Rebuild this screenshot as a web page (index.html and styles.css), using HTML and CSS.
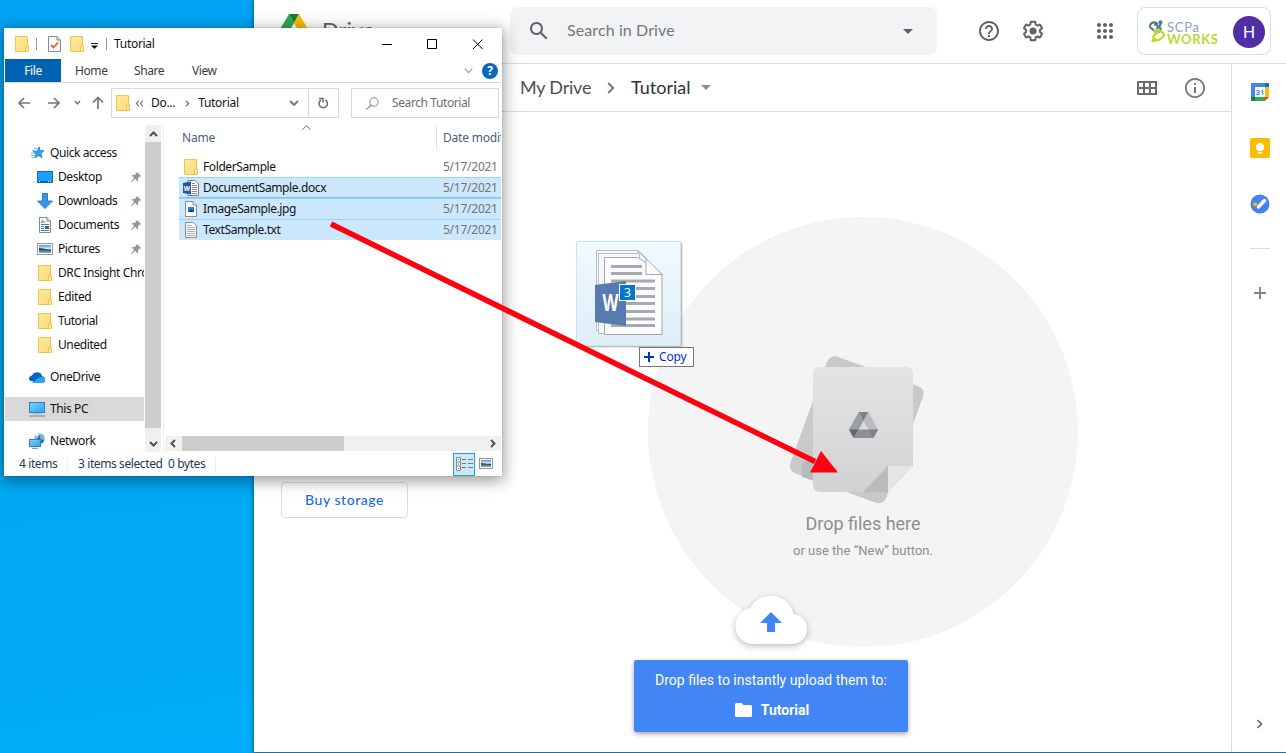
FILE: index.html
```html
<!DOCTYPE html>
<html lang="en">
<head>
<meta charset="utf-8">
<title>Tutorial - Google Drive</title>
<link rel="stylesheet" href="styles.css">
</head>
<body>
<svg width="0" height="0" class="defs">
  <defs>
    <linearGradient id="gFolder" x1="0" y1="0" x2="1" y2="1"><stop offset="0" stop-color="#ffeaa0"/><stop offset="1" stop-color="#ffdc74"/></linearGradient>
    <linearGradient id="gScreen" x1="0" y1="0" x2="1" y2="1"><stop offset="0" stop-color="#7fd0ff"/><stop offset="1" stop-color="#2aa5f5"/></linearGradient>
    <linearGradient id="gPhoto" x1="0" y1="0" x2="0" y2="1"><stop offset="0" stop-color="#4f8fe0"/><stop offset=".45" stop-color="#d8ecf8"/><stop offset=".6" stop-color="#2f5d66"/><stop offset="1" stop-color="#8fb9c9"/></linearGradient>
    <linearGradient id="gPaper" x1="0" y1="0" x2="0" y2="1"><stop offset="0" stop-color="#e4e4e4"/><stop offset="1" stop-color="#d0d2d4"/></linearGradient>
    <symbol id="folder" viewBox="0 0 14 16"><path d="M.5.5h12v9.500h.9v5.500H.5z" fill="url(#gFolder)" stroke="#eac54f"/><path d="M10.500 15.500V11q0-1 1-1h1.900v5.500z" fill="#ffe79a" stroke="#eac54f"/></symbol>
    <symbol id="pin" viewBox="0 0 10 10"><path d="M6 0l4 4-.8.8-.6-.2L7 6.300l.2 2-.9.900L4 6.900.6 10H0v-.6L3.100 6 .8 3.700l.9-.9 2 .2L5.400 1.400 5.200.8z" fill="#8c99a3"/></symbol>
    <symbol id="photo" viewBox="0 0 16 12"><rect x=".5" y=".5" width="15" height="11" fill="#fff" stroke="#979797"/><rect x="2" y="2" width="12" height="8" fill="url(#gPhoto)"/><path d="M2 5q5 0 12 3v-1H2z" fill="#24505c"/></symbol>
  </defs>
</svg>

<section class="browser">
  <header class="topbar">
    <div class="brand">
      <svg width="30" height="27" viewBox="0 0 30 27"><path d="M10 0L0 17l5 9 10-17z" fill="#34a853"/><path d="M10 0h10l-5 9z" fill="#188038"/><path d="M20 0l10 17H20L15 9z" fill="#fbbc04"/><path d="M10 17h20l-5 9H5z" fill="#4285f4"/></svg>
      <span>Drive</span>
    </div>
    <div class="search">
      <svg width="24" height="24" viewBox="0 0 24 24" fill="#5f6368"><path d="M20.490 19l-5.730-5.730C15.530 12.200 16 10.910 16 9.500 16 5.910 13.090 3 9.500 3S3 5.910 3 9.500 5.910 16 9.500 16c1.410 0 2.700-.47 3.770-1.240L19 20.490 20.490 19zM5 9.500C5 7.010 7.010 5 9.500 5S14 7.010 14 9.500 11.990 14 9.500 14 5 11.990 5 9.500z"/></svg>
      <span class="search-text">Search in Drive</span>
      <svg width="10" height="5" viewBox="0 0 10 5"><path d="M0 0h10L5 5z" fill="#5f6368"/></svg>
    </div>
    <div class="tools">
      <svg width="24" height="24" viewBox="0 0 24 24" fill="#5f6368"><path d="M11 18h2v-2h-2v2zm1-16C6.480 2 2 6.480 2 12s4.480 10 10 10 10-4.480 10-10S17.520 2 12 2zm0 18c-4.410 0-8-3.590-8-8s3.590-8 8-8 8 3.590 8 8-3.590 8-8 8zm0-14c-2.210 0-4 1.790-4 4h2c0-1.100.9-2 2-2s2 .9 2 2c0 2-3 1.750-3 5h2c0-2.250 3-2.500 3-5 0-2.210-1.790-4-4-4z"/></svg>
      <svg class="gear" width="24" height="24" viewBox="0 0 24 24" fill="#5f6368"><path d="M13.850 22.250h-3.700c-.74 0-1.360-.54-1.450-1.270l-.27-1.890c-.27-.14-.53-.29-.79-.46l-1.800.72c-.7.260-1.470-.03-1.810-.65L2.200 15.530c-.35-.66-.2-1.440.36-1.880l1.530-1.190c-.01-.15-.02-.3-.02-.46 0-.15.010-.31.020-.46l-1.520-1.190c-.59-.45-.74-1.260-.37-1.880l1.850-3.190c.34-.62 1.110-.9 1.790-.63l1.810.73c.26-.17.520-.32.780-.46l.27-1.910c.09-.7.710-1.250 1.440-1.250h3.700c.74 0 1.360.54 1.450 1.270l.27 1.890c.27.140.53.290.79.460l1.800-.72c.71-.26 1.480.03 1.820.65l1.840 3.180c.36.660.2 1.440-.36 1.880l-1.520 1.190c.01.150.02.300.02.460s-.01.310-.02.460l1.520 1.190c.56.450.72 1.230.37 1.860l-1.860 3.220c-.34.620-1.110.900-1.800.63l-1.800-.72c-.26.170-.52.320-.78.460l-.27 1.910c-.1.680-.72 1.220-1.460 1.220zm-3.230-2h2.760l.37-2.550.53-.22c.44-.18.880-.44 1.340-.78l.45-.34 2.380.96 1.380-2.400-2.030-1.580.07-.56c.03-.26.060-.51.060-.78s-.03-.53-.06-.78l-.07-.56 2.030-1.580-1.390-2.400-2.390.96-.45-.35c-.42-.32-.87-.58-1.330-.77l-.52-.22-.37-2.550h-2.760l-.37 2.550-.53.210c-.44.190-.88.440-1.340.79l-.45.330-2.380-.95-1.390 2.390 2.030 1.580-.07.560a7 7 0 0 0-.06.790c0 .26.020.53.060.78l.07.560-2.030 1.580 1.380 2.400 2.390-.96.450.35c.43.330.86.580 1.330.77l.53.220.38 2.550z"/><circle cx="12" cy="12" r="3.500"/></svg>
      <svg width="24" height="24" viewBox="0 0 24 24" fill="#5f6368"><path d="M6 8c1.100 0 2-.9 2-2s-.9-2-2-2-2 .9-2 2 .9 2 2 2zm6 12c1.100 0 2-.9 2-2s-.9-2-2-2-2 .9-2 2 .9 2 2 2zm-6 0c1.100 0 2-.9 2-2s-.9-2-2-2-2 .9-2 2 .9 2 2 2zm0-6c1.100 0 2-.9 2-2s-.9-2-2-2-2 .9-2 2 .9 2 2 2zm6 0c1.100 0 2-.9 2-2s-.9-2-2-2-2 .9-2 2 .9 2 2 2zm4-8c0 1.100.9 2 2 2s2-.9 2-2-.9-2-2-2-2 .9-2 2zm-4 2c1.100 0 2-.9 2-2s-.9-2-2-2-2 .9-2 2 .9 2 2 2zm6 6c1.100 0 2-.9 2-2s-.9-2-2-2-2 .9-2 2 .9 2 2 2zm0 6c1.100 0 2-.9 2-2s-.9-2-2-2-2 .9-2 2 .9 2 2 2z"/></svg>
    </div>
    <div class="account">
      <svg width="17" height="23" viewBox="0 0 17 23" fill="none" stroke-width="2.200" stroke-linecap="round"><path d="M11.500 4.500L8 8.500M8 3.500Q4.500 1 2 3.800t.5 4.700L6 11.500q3 1.700 5-.8 1.200-2.200-.5-4L6 4.500" stroke="#527b8e"/><circle cx="11.500" cy="2.200" r="2" fill="#527b8e" stroke="none"/><path d="M5 11l2.500 3M8 9.800l5.500 2.500q2.800 2 .3 4.700l-3.500 2.800q-3 1.500-5-1t.5-4.500L9 12" stroke="#bfd630"/><circle cx="4.500" cy="20.300" r="2" fill="#bfd630" stroke="none"/></svg>
      <div class="org"><span class="org-a">SCPa</span><span class="org-b">WORKS</span></div>
      <span class="avatar">H</span>
    </div>
  </header>

  <div class="content">
    <aside class="side"><span class="buy">Buy storage</span></aside>
    <main class="main">
      <div class="crumbs">
        <span class="crumb">My Drive</span>
        <svg class="chev" width="8" height="12" viewBox="0 0 8 12"><path d="M1.200 1l5 5-5 5" fill="none" stroke="#757575" stroke-width="1.900"/></svg>
        <span class="crumb current">Tutorial</span>
        <svg class="caret" width="10" height="5" viewBox="0 0 10 5"><path d="M0 0h10L5 5z" fill="#8d9093"/></svg>
        <svg class="grid" width="20" height="14" viewBox="0 0 20 14"><path d="M1 1h18v12H1zM1 7h18M7 1v12M13 1v12" fill="none" stroke="#6b6b6b" stroke-width="2"/></svg>
        <svg width="24" height="24" viewBox="0 0 24 24" fill="#757575"><path d="M11 17h2v-6h-2v6zm1-15C6.480 2 2 6.480 2 12s4.480 10 10 10 10-4.480 10-10S17.520 2 12 2zm0 18.200c-4.500 0-8.200-3.700-8.200-8.200S7.500 3.800 12 3.800s8.200 3.700 8.200 8.200-3.700 8.200-8.200 8.200zM11 9h2V7h-2v2z"/></svg>
      </div>
      <div class="drop-area">
        <div class="circle">
          <svg class="paper" width="136" height="150" viewBox="0 0 136 150">
            <g transform="translate(40 -1) rotate(20)"><rect x="0" y="0" width="102" height="124" rx="8" fill="#c9c9c9"/></g>
            <path d="M12 122V109l7-7h5v24z" fill="#b9babb"/>
            <path d="M30 12h86q7 0 7 7v92l-25 26H30q-7 0-7-7V19q0-7 7-7z" fill="url(#gPaper)"/>
            <path d="M123 111l-25 26v-26z" fill="#e5e5e5"/><path d="M98 111v26H73z" fill="#babbbd"/>
            <g transform="translate(59 57)"><path d="M9.700 0L0 17.500l4.700 8.500L14.500 9z" fill="#9aa0a6"/><path d="M9.700 0h9.600l-4.800 9z" fill="#7d8186"/><path d="M19.300 0L29 17.500H19.400L14.500 9z" fill="#b8bcc2"/><path d="M9.500 17.500H29L24.300 26H4.700z" fill="#8d9196"/><path d="M0 17.500h9.500L4.700 26z" fill="#63676a"/><path d="M19.400 17.500H29L24.300 26z" fill="#7d8287"/></g>
          </svg>
          <p class="drop-title">Drop files here</p>
          <p class="drop-sub">or use the “New” button.</p>
        </div>
      </div>
    </main>
    <nav class="rail">
      <svg width="20" height="20" viewBox="0 0 20 20"><path d="M2 1h13v4H5v10H1V2q0-1 1-1z" fill="#4285f4"/><path d="M15 1h3q1 0 1 1v3h-4z" fill="#1967d2"/><path d="M15 5h4v10h-4z" fill="#fbbc04"/><path d="M5 15h10v4H5z" fill="#34a853"/><path d="M1 15h4v4H2q-1 0-1-1z" fill="#188038"/><path d="M15 15h4l-4 4z" fill="#ea4335"/><path d="M5 5h10v10H5z" fill="#fff"/><text x="10" y="13.200" text-anchor="middle" class="cal">31</text></svg>
      <svg width="20" height="20" viewBox="0 0 20 20"><rect width="20" height="20" rx="1.500" fill="#fbbc04"/><circle cx="10" cy="9" r="4" fill="#fff"/><path d="M8 10h4v3H8zM8 14h4v1.500H8z" fill="#fff"/></svg>
      <svg width="20" height="20" viewBox="0 0 20 20"><circle cx="10" cy="10" r="9.500" fill="#4a80ed"/><path d="M8.500 13l6-6.500" stroke="#fff" stroke-width="3.400" stroke-linecap="round"/><circle cx="5.200" cy="10.200" r="2" fill="#fbbc04"/></svg>
      <hr>
      <svg class="plus" width="12" height="12" viewBox="0 0 12 12"><path d="M6 0v12M0 6h12" stroke="#80868b" stroke-width="2"/></svg>
      <svg class="collapse" width="8" height="10" viewBox="0 0 8 10"><path d="M1.500 1l4 4-4 4" fill="none" stroke="#5f6368" stroke-width="1.600"/></svg>
    </nav>
  </div>

  <div class="upload">
    <svg width="72" height="48" viewBox="0 0 72 48"><path d="M17 48A17.500 18 0 0 1 15.500 12.200C19 4.500 27 0 36 0 48 0 57 8 58.300 18 66 18.500 72 25 72 33S66 48 57 48z" fill="#fff"/><path d="M36 16l11 11h-7v9h-8v-9h-7z" fill="#4285f4"/></svg>
    <div class="toast">
      <span>Drop files to instantly upload them to:</span>
      <strong><svg width="17" height="14" viewBox="0 0 17 14"><path d="M1.500 0h5l2 2h7Q17 2 17 3.500v9q0 1.500-1.500 1.500h-14Q0 14 0 12.500v-11Q0 0 1.500 0z" fill="#fff"/></svg>Tutorial</strong>
    </div>
  </div>
</section>

<section class="explorer">
  <div class="titlebar">
    <svg width="14" height="16"><use href="#folder"/></svg>
    <i class="sep"></i>
    <svg class="prop" width="13" height="16" viewBox="0 0 13 16"><path d="M.5.5H9L12.500 4v11.500H.5z" fill="#f8f8f8" stroke="#8b8b8b"/><path d="M9 .5V4h3.500" fill="#ddd" stroke="#8b8b8b"/><path d="M3 9l2.500 2.500L10 6.500" fill="none" stroke="#e8632b" stroke-width="1.800"/></svg>
    <svg width="14" height="16"><use href="#folder"/></svg>
    <svg class="qa" width="7" height="6" viewBox="0 0 7 6"><path d="M0 0h7v1H0zM0 2.500h7L3.500 6z" fill="#111"/></svg>
    <i class="sep"></i>
    <span class="wtitle">Tutorial</span>
    <svg class="wbtns" width="101" height="12" viewBox="0 0 101 12" fill="none" stroke="#000"><path d="M0 6.500h10M45.500 1.500h9v9h-9zM91 1.500l9.500 9.500M100.500 1.500L91 11"/></svg>
  </div>
  <div class="tabs">
    <span class="file">File</span><span class="tab t1">Home</span><span class="tab t2">Share</span><span class="tab t3">View</span>
    <svg class="ribbon" width="9" height="6" viewBox="0 0 9 6"><path d="M.7.700l3.800 4 3.800-4" fill="none" stroke="#999" stroke-width="1.200"/></svg>
    <span class="help">?</span>
  </div>
  <div class="address">
    <svg class="arrows" width="88" height="14" viewBox="0 0 88 14" fill="none" stroke="#767676" stroke-width="1.700"><path d="M7 2L2 7l5 5M2 7h11M37 2l5 5-5 5M42 7H31"/><path d="M57.800 5l2.600 2.800L63 5" stroke-width="1.500"/><path d="M76 6.500l5-5 5 5M81 1.500V13"/></svg>
    <div class="path">
      <svg width="14" height="16"><use href="#folder"/></svg>
      <svg class="dbl" width="9" height="7" viewBox="0 0 9 7"><path d="M4 .7L1.300 3.500 4 6.300M8 .7L5.300 3.500 8 6.300" fill="none" stroke="#777" stroke-width="1.100"/></svg>
      <span>Do...</span>
      <svg class="pc" width="5" height="7" viewBox="0 0 5 7"><path d="M1 .7l2.600 2.800L1 6.300" fill="none" stroke="#777" stroke-width="1.300"/></svg>
      <span>Tutorial</span>
      <svg class="pd" width="10" height="7" viewBox="0 0 10 7"><path d="M1 1l4 4 4-4" fill="none" stroke="#767676" stroke-width="1.900"/></svg>
      <span class="refresh"><svg width="11" height="12" viewBox="0 0 11 12"><path d="M7.500 3A4.200 4.200 0 1 1 3 3" fill="none" stroke="#6d6d6d" stroke-width="1.500"/><path d="M1 1.500h4v4" fill="none" stroke="#6d6d6d" stroke-width="1.500"/></svg></span>
    </div>
    <div class="find"><svg width="13" height="13" viewBox="0 0 13 13"><circle cx="8" cy="5" r="4.200" fill="none" stroke="#8e88a0"/><path d="M5 8L.5 12.500" stroke="#8e88a0" stroke-width="1.200"/></svg><span>Search Tutorial</span></div>
  </div>
  <div class="panes">
    <div class="tree">
      <div class="node root"><svg width="16" height="14" viewBox="0 0 16 14"><path d="M10 .8l1.200 3.700 3.800.2-3 2.800 1 4.300-3.500-2.300L6 12l1-4.300-3-2.500h4.200z" fill="#2e9fe8" stroke="#1579c0" stroke-width=".7"/><path d="M5 2.500h3M3 4.500h3M2 7h4M2 9.500h4M2.500 11.800h3" stroke="#5ab4ea" stroke-width=".9"/></svg><span>Quick access</span></div>
      <div class="node"><svg width="16" height="12" viewBox="0 0 16 12"><rect x=".5" y=".5" width="15" height="11" fill="#1c9dff" stroke="#0f6fc0"/><path d="M1 10h14v1.500H1z" fill="#0863b1"/><path d="M2 10.500h1M11 10.500h1M13 10.500h1" stroke="#fff"/></svg><span>Desktop</span><svg class="pin" width="10" height="10"><use href="#pin"/></svg></div>
      <div class="node"><svg width="16" height="16" viewBox="0 0 16 16"><path d="M5.500.5h5V8h5L8 15.500.5 8h5z" fill="#3b95e0" stroke="#2a7fc8"/></svg><span>Downloads</span><svg class="pin" width="10" height="10"><use href="#pin"/></svg></div>
      <div class="node"><svg width="16" height="16" viewBox="0 0 16 16"><path d="M2.500.5H10L13.500 4v11.500h-11z" fill="#fff" stroke="#858585"/><path d="M10 .5V4h3.500" fill="#ddd" stroke="#858585"/><path d="M4 6l2-3M5 5h3M4 7.500h8M4 9.500h3M4 11.500h3M4 13.500h8" stroke="#2b8bd0"/><path d="M8 9h4v3H8z" fill="#4b6572"/></svg><span>Documents</span><svg class="pin" width="10" height="10"><use href="#pin"/></svg></div>
      <div class="node"><svg width="16" height="12"><use href="#photo"/></svg><span>Pictures</span><svg class="pin" width="10" height="10"><use href="#pin"/></svg></div>
      <div class="node"><svg width="16" height="16"><use href="#folder"/></svg><span>DRC Insight Chrome</span></div>
      <div class="node"><svg width="16" height="16"><use href="#folder"/></svg><span>Edited</span></div>
      <div class="node"><svg width="16" height="16"><use href="#folder"/></svg><span>Tutorial</span></div>
      <div class="node"><svg width="16" height="16"><use href="#folder"/></svg><span>Unedited</span></div>
      <div class="node root gap"><svg width="16" height="11" viewBox="0 0 16 11"><path d="M4 9Q0 9.500 0 6.500 0 4 3 3.500 5 0 8.500.200T13 4q3 .5 3 3.500T13 11H4z" fill="#0a64c0"/><path d="M3 10.800L11 5q5-1 5 3 0 3-3 3H4z" fill="#28a8ea"/></svg><span>OneDrive</span></div>
      <div class="node root gap selected"><svg width="16" height="15" viewBox="0 0 16 15"><rect x=".5" y=".5" width="15" height="10" fill="url(#gScreen)" stroke="#3b7fb0"/><path d="M4 11.800h8" stroke="#9bb"/><path d="M0 14h16" stroke="#7898b8" stroke-width="1.200"/></svg><span>This PC</span></div>
      <div class="node root gap"><svg width="16" height="16" viewBox="0 0 16 16"><circle cx="10.500" cy="5.500" r="5.200" fill="#7eb2cc"/><path d="M8 1q4 1 3 5l4 1q0 3-3 3.500l-1-3-3-2z" fill="#3a7590"/><path d="M6.500 2q2-2 4-1L8 5z" fill="#d8eef6"/><rect x=".5" y="6.500" width="11" height="7" fill="url(#gScreen)" stroke="#3b7fb0"/><path d="M3 15.300h6" stroke="#59a"/></svg><span>Network</span></div>
    </div>
    <div class="vscroll">
      <svg width="9" height="6" viewBox="0 0 9 6"><path d="M1 5l3.500-3.500L8 5" fill="none" stroke="#505050" stroke-width="2"/></svg>
      <div class="vthumb"></div>
      <svg width="9" height="6" viewBox="0 0 9 6"><path d="M1 1l3.500 3.500L8 1" fill="none" stroke="#505050" stroke-width="2"/></svg>
    </div>
    <div class="files">
      <div class="cols"><span class="c-name">Name</span><svg width="9" height="5" viewBox="0 0 9 5"><path d="M.7 4.500l3.800-3.800 3.800 3.800" fill="none" stroke="#666"/></svg><span class="c-date">Date modified</span></div>
      <div class="row"><svg width="16" height="16"><use href="#folder"/></svg><span class="name">FolderSample</span><span class="date">5/17/2021 11:30 AM</span></div>
      <div class="row sel focus"><svg width="16" height="16" viewBox="0 0 16 16"><path d="M5 .5h7L15.500 4v11.500H5z" fill="#fff" stroke="#7f7f7f"/><path d="M9 3.500h3M9 5.500h5M9 7.500h5M9 9.500h5M9 11.500h5M9 13.500h5" stroke="#888"/><path d="M0 3l8-1.500v13L0 13z" fill="#2b579a"/><text x="3.900" y="10.800" class="wsmall" text-anchor="middle">W</text></svg><span class="name">DocumentSample.docx</span><span class="date">5/17/2021 11:30 AM</span></div>
      <div class="row sel"><svg width="16" height="16" viewBox="0 0 16 16"><path d="M2.500.5H10L13.500 4v11.500h-11z" fill="#fff" stroke="#8b8b8b"/><path d="M10 .5V4h3.500" fill="#eee" stroke="#8b8b8b"/><path d="M5 6h6v5H5z" fill="#1f8fe0"/><path d="M5 11l3-3 3 1.500V11z" fill="#10447c"/></svg><span class="name">ImageSample.jpg</span><span class="date">5/17/2021 11:30 AM</span></div>
      <div class="row sel last"><svg width="16" height="16" viewBox="0 0 16 16"><path d="M2.500.5H10L13.500 4v11.500h-11z" fill="#fff" stroke="#8b8b8b"/><path d="M4 3.500h5M4 5.500h8M4 7.500h8M4 9.500h8M4 11.500h8M4 13.500h8" stroke="#aaa"/></svg><span class="name">TextSample.txt</span><span class="date">5/17/2021 11:30 AM</span></div>
      <div class="hscroll">
        <svg width="6" height="9" viewBox="0 0 6 9"><path d="M5 1L1.500 4.500 5 8" fill="none" stroke="#505050" stroke-width="2"/></svg>
        <div class="hthumb"></div>
        <svg width="6" height="9" viewBox="0 0 6 9"><path d="M1 1l3.500 3.500L1 8" fill="none" stroke="#505050" stroke-width="2"/></svg>
      </div>
    </div>
  </div>
  <div class="status">
    <span class="s1">4 items</span><span class="s2">3 items selected</span><span class="s3">0 bytes</span>
    <span class="view"><svg width="17" height="14" viewBox="0 0 17 14"><path d="M.5.500h4v13h-4zM.5 5h4M.5 9h4" fill="#fff" stroke="#8b8b8b"/><path d="M2 2.500h1M2 11.500h1" stroke="#c33"/><path d="M2 7h1" stroke="#36c"/><path d="M6 2.500h4M12 2.500h5M6 6.500h4M12 6.500h5M6 10.500h4M12 10.500h5" stroke="#777"/></svg></span>
    <svg class="thumbs" width="14" height="11" viewBox="0 0 14 11"><rect x=".5" y=".5" width="13" height="10" fill="#fff" stroke="#979797"/><rect x="2" y="2" width="10" height="7" fill="url(#gPhoto)"/><path d="M2 5q4 0 10 2.500V6H2z" fill="#24505c"/></svg>
  </div>
</section>

<div class="drag">
  <svg width="104" height="104" viewBox="0 0 104 104">
    <g stroke="#b9c1c6" fill="#f4f8fa"><path d="M20.500 9.500h41v80h-41z"/><path d="M22.500 12.500h41v80h-41z"/></g>
    <path d="M28.500 16.500H62L86 33v60.500H28.500z" fill="#fbfcfd" stroke="#a6a9ab"/>
    <path d="M62 9.500L86 33.500H70V17.500z" fill="#fdfdfd" stroke="#a6a9ab"/>
    <path d="M35 25.500h31M35 32.500h31M35 40h44M35 47.500h44M35 55.500h44M35 62.500h44M35 70.500h44M35 78h44M35 84.500h44" stroke="#a7a9ac" stroke-width="3"/>
    <path d="M19 44l31-4v45l-31-4z" fill="#577bb1"/>
    <text x="34.500" y="70" text-anchor="middle" class="wbig" textLength="16" lengthAdjust="spacingAndGlyphs">W</text>
  </svg>
  <span class="count">3</span>
</div>
<div class="copy"><svg width="10" height="10" viewBox="0 0 10 10"><path d="M5 0v10M0 5h10" stroke="#0033cc" stroke-width="2"/></svg>Copy</div>

<svg class="pointer" width="520" height="262" viewBox="0 0 520 262"><path d="M6 6L490 243.500" stroke="#ff0010" stroke-width="5.500"/><path d="M513 254.500l-17-21.500-11 21.500z" fill="#ff0010"/></svg>
</body>
</html>
```

FILE: styles.css
```css
* { box-sizing: border-box; }
body {
  margin: 0; width: 1286px; height: 753px; overflow: hidden; position: relative;
  background: linear-gradient(172deg, #00a2f6 0, #00a6f4 12%, #00a9f2 75%, #00aef8 80%, #00a6f4 100%);
  font-family: Roboto, "Liberation Sans", sans-serif;
}
svg { display: block; flex: none; }
.defs { position: absolute; }
p { margin: 0; }

/* Browser window */
.browser {
  position: absolute; left: 254px; top: 0; width: 1032px; height: 753px;
  display: flex; flex-direction: column;
  background: #fff; border-bottom: 1px solid #2273a5; box-shadow: -1px 0 4px rgba(0,0,0,.4);
}
.topbar { display: flex; height: 64px; border-bottom: 1px solid #dadce0; }
.brand { display: flex; flex: none; width: 256px; padding: 14px 0 0 25px; gap: 13px; font: 22px/32px Lato, sans-serif; color: #5f6368; }
.search { display: flex; flex: none; align-items: center; width: 427px; height: 48px; margin-top: 7px; padding: 0 24px 0 17px; background: #f1f3f4; border-radius: 8px; }
.search-text { flex: 1; padding: 0 0 2px 16px; font: 16px/22px Lato, sans-serif; color: #74777a; letter-spacing: .1px; }
.tools { display: flex; gap: 20px; margin: 19px 0 0 40px; }
.tools .gear { margin-right: 28px; }
.account {
  display: flex; align-items: center; width: 134px; height: 48px; margin: 7px 0 0 20px; padding: 1px 5px 0 11px;
  border: 1px solid #dadce0; border-radius: 8px;
}
.org { display: flex; flex-direction: column; justify-content: center; width: 54px; padding: 2px 0 0 1px; font: 13px/12px Lato, sans-serif; }
.org-a { color: #8aa4b1; letter-spacing: .7px; }
.org-b { color: #bfd630; font-weight: 700; letter-spacing: .6px; }
.avatar { width: 32px; height: 32px; margin-left: auto; border-radius: 50%; background: #512da8; color: #fff; font: 17px/33px Roboto, sans-serif; text-align: center; }

.content { display: flex; flex: 1; min-height: 0; }
.side { width: 242px; padding: 418px 0 0 27px; }
.buy { display: block; width: 127px; height: 36px; border: 1px solid #dadce0; border-radius: 4px; color: #1a6ae8; font: 500 14px/33px Lato, sans-serif; letter-spacing: .55px; text-align: center; white-space: nowrap; }
.main { display: flex; flex: none; flex-direction: column; width: 735px; }
.crumbs { display: flex; align-items: center; height: 48px; padding: 0 24px; border-bottom: 1px solid #dadce0; font: 18px/22px Lato, sans-serif; color: #4c4f53; }
.crumb { width: 71px; padding-bottom: 2px; letter-spacing: -.2px; white-space: nowrap; }
.current { width: 60px; color: #303236; letter-spacing: 0; }
.chev { margin: 0 16px; }
.caret { margin-left: 10px; }
.grid { margin: 0 26px 0 auto; }
.drop-area { display: flex; flex: 1; align-items: center; justify-content: center; padding-right: 1px; }
.circle { display: flex; flex-direction: column; align-items: center; width: 430px; height: 430px; padding-top: 138px; border-radius: 50%; background: #f4f4f4; color: #8e8e8e; }
.paper { margin-right: 10px; overflow: visible; }
.drop-title { margin-top: 7px; font-size: 18px; line-height: 24px; }
.drop-sub { margin-top: 5px; font-size: 13px; line-height: 20px; }
.rail { display: flex; flex-direction: column; align-items: center; flex: 1; padding: 18px 0 23px 2px; gap: 36px; border-left: 1px solid #dadce0; }
.rail hr { width: 20px; height: 1px; margin: -2px 0 0; border: 0; background: #dadce0; }
.plus { margin-top: 2px; }
.collapse { margin-top: auto; }
.cal { font: bold 8px Roboto, sans-serif; fill: #4285f4; }

.upload { position: absolute; left: 380px; top: 596px; display: flex; flex-direction: column; align-items: center; gap: 16px; width: 274px; }
.upload > svg { overflow: visible; filter: drop-shadow(0 2px 3px rgba(0,0,0,.28)); }
.toast { width: 274px; height: 72px; padding-top: 10px; border-radius: 2px; background: #4285f4; box-shadow: 0 2px 5px rgba(0,0,0,.35); color: #fff; font-size: 14px; line-height: 20px; text-align: center; }
.toast span { display: block; }
.toast strong { display: flex; align-items: center; justify-content: center; gap: 9px; margin: 10px 0 0 2px; font-weight: 700; }

/* File manager window */
.explorer {
  position: absolute; left: 4px; top: 28px; width: 498px; height: 448px; padding: 0 1px;
  display: flex; flex-direction: column; background: #fff;
  box-shadow: 0 3px 14px 2px rgba(0,0,0,.38), 0 0 1px rgba(0,0,0,.3);
  font: 12px/16px "Noto Sans", sans-serif; letter-spacing: -.4px; color: #111; white-space: nowrap;
}
.titlebar { display: flex; align-items: center; height: 31px; padding-left: 10px; }
.sep { width: 1px; height: 12px; background: #999; margin: 0 11px 0 7px; }
.prop { margin-right: 9px; }
.qa { margin: 4px 0 0 7px; }
.qa + .sep { margin: 0 7px 0 8px; }
.wtitle { letter-spacing: -.3px; }
.wbtns { margin: 0 18px 0 auto; }
.tabs { display: flex; align-items: center; height: 24px; border-bottom: 1px solid #dadbdc; color: #3b3b3b; }
.file { width: 56px; height: 23px; background: #0063b1; color: #fff; line-height: 24px; text-align: center; }
.tab { width: 58px; padding-left: 14px; }
.t2 { padding-left: 15px; }
.t3 { padding-left: 15px; }
.ribbon { margin: 0 9px 0 auto; }
.help { width: 16px; height: 16px; margin-right: 3px; border-radius: 50%; background: #0b67c4; color: #fff; font-weight: 700; text-align: center; letter-spacing: 0; }
.address { display: flex; align-items: center; height: 40px; padding: 0 2px 0 12px; }
.arrows { margin-right: 6px; }
.path { display: flex; align-items: center; width: 228px; height: 30px; border: 1px solid #d9d9d9; padding-left: 4px; }
.path span { letter-spacing: -.3px; }
.dbl { margin: 0 7px 0 5px; }
.pc { margin: 0 8px 0 10px; }
.pd { margin: 0 9px 0 auto; }
.refresh { display: grid; place-items: center; width: 30px; height: 28px; border-left: 1px solid #d9d9d9; }
.find { display: flex; align-items: center; gap: 13px; width: 148px; height: 30px; margin-left: 12px; padding-left: 14px; border: 1px solid #d9d9d9; color: #6d6d6d; }

.panes { display: flex; height: 329px; padding-top: 2px; }
.tree { flex: none; width: 140px; padding-top: 16px; overflow: hidden; }
.node { display: flex; align-items: center; gap: 5px; width: 139px; height: 24px; padding: 0 3px 0 32px; overflow: hidden; }
.node > svg:first-child { width: 16px; }
.root { padding-left: 24px; }
.gap { margin-top: 8px; }
.selected { background: #d9d9d9; }
.pin { margin-left: auto; }
.vscroll { display: flex; flex-direction: column; align-items: center; width: 16px; padding: 6px 0 5px; background: #f0f0f0; }
.vthumb { width: 16px; height: 286px; margin: 5px 0 auto; background: #cdcdcd; }
.files { flex: 1; min-width: 0; display: flex; flex-direction: column; margin-left: 2px; border-left: 1px solid #eee; overflow: hidden; }
.cols { display: flex; height: 31px; padding-left: 18px; color: #4c607a; letter-spacing: -.2px; }
.c-name { flex: none; width: 120px; padding-top: 5px; }
.c-date { flex: none; height: 25px; margin-left: 125px; padding: 5px 0 0 6px; border-left: 1px solid #e5e5e5; }
.row { display: flex; align-items: center; height: 21px; margin-left: 15px; padding-left: 4px; }
.name { flex: none; width: 244px; padding-left: 4px; }
.date { color: #737373; letter-spacing: -.25px; }
.sel { background: #cce8ff; border-top: 1px solid #99d1ff; }
.focus { border-bottom: 1px solid #7abfff; }
.hscroll { display: flex; align-items: center; height: 15px; margin: auto 0 1px 1px; padding: 0 5px; background: #f0f0f0; }
.hthumb { width: 162px; height: 15px; margin: 0 auto 0 6px; background: #cdcdcd; }

.status { display: flex; align-items: center; height: 24px; color: #1e395b; letter-spacing: -.4px; }
.s1 { flex: none; width: 63px; padding-left: 14px; border-right: 1px solid #eee; }
.s2 { flex: none; width: 96px; padding-left: 10px; }
.s3 { flex: none; width: 52px; padding-left: 4px; border-right: 1px solid #eee; }
.view { display: grid; place-items: center; width: 22px; height: 23px; margin: 0 4px 0 auto; border: 1px solid #26a0da; background: #cbe8f6; }
.thumbs { margin: 0 8px 2px 0; }

/* Drag feedback */
.drag { position: absolute; left: 576px; top: 241px; width: 105px; height: 105px; border: 1px solid rgba(190,225,240,.8); border-radius: 2px; background: linear-gradient(#f1faff, #dfeef6); box-shadow: 1px 1px 2px rgba(0,0,0,.35); }
.drag svg { margin: -1px; }
.count { position: absolute; left: 42px; top: 42px; width: 17px; height: 17px; border: 1px solid #fff; background: #0078d0; color: #fff; font: 12px/16px "Noto Sans", sans-serif; text-align: center; }
.wbig { font: bold 23px "Noto Sans", sans-serif; fill: #fff; }
.wsmall { font: bold 6.5px "Noto Sans", sans-serif; fill: #fff; letter-spacing: 0; }
.copy { position: absolute; left: 639px; top: 347px; display: flex; align-items: center; gap: 5px; width: 55px; height: 20px; padding-left: 4px; border: 1px solid #767676; background: #fff; color: #0033cc; font: 12px/16px "Noto Sans", sans-serif; letter-spacing: -.2px; }
.pointer { position: absolute; left: 325px; top: 218px; }
```
